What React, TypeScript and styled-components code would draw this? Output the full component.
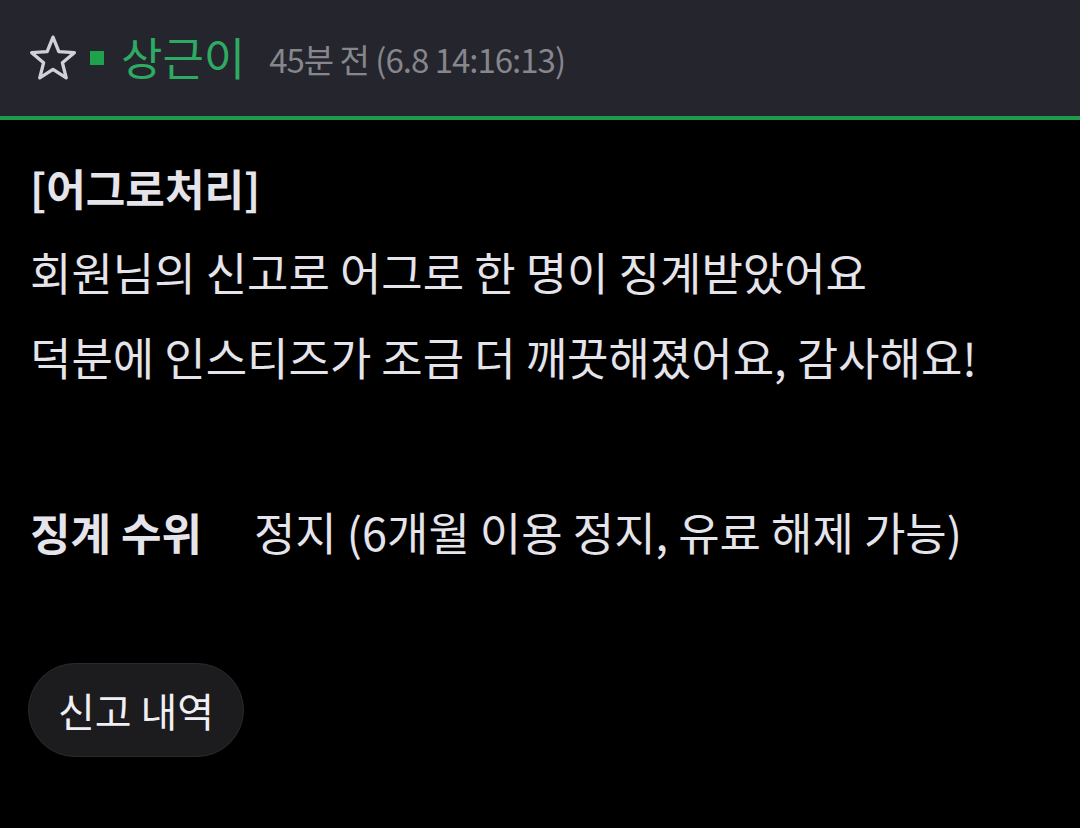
import styled, { createGlobalStyle } from 'styled-components';

const GlobalStyle = createGlobalStyle`
  html, body {
    margin: 0;
    padding: 0;
    background: #000000;
  }
  body {
    font-family: 'Noto Sans CJK KR', 'Noto Sans', sans-serif;
  }
`;

const StarIcon = () => (
  <svg width="50" height="48" viewBox="0 0 48 46" fill="none">
    <path
      d="M24 3 L29.6 16.9 L44.5 17.9 L33 27.5 L36.7 42 L24 34 L11.3 42 L15 27.5 L3.5 17.9 L18.4 16.9 Z"
      stroke="#d2d2d6"
      strokeWidth="3.2"
      strokeLinejoin="round"
    />
  </svg>
);

export default function App() {
  return (
    <Page>
      <GlobalStyle />
      <Header>
        <StarButton>
          <StarIcon />
        </StarButton>
        <Badge />
        <Nick>상근이</Nick>
        <Time>45분 전 (6.8 14:16:13)</Time>
      </Header>

      <Body>
        <Title>[어그로처리]</Title>
        <Line>회원님의 신고로 어그로 한 명이 징계받았어요</Line>
        <Line>덕분에 인스티즈가 조금 더 깨끗해졌어요, 감사해요!</Line>

        <InfoRow>
          <InfoLabel>징계 수위</InfoLabel>
          <InfoValue>정지 (6개월 이용 정지, 유료 해제 가능)</InfoValue>
        </InfoRow>

        <PillButton>신고 내역</PillButton>
      </Body>
    </Page>
  );
}

const Page = styled.div`
  width: 1080px;
  min-height: 828px;
  background: #000000;
  color: #e4e4ea;
`;

const Header = styled.div`
  display: flex;
  align-items: center;
  height: 116px;
  padding: 0 0 0 28px;
  background: #24252d;
  border-bottom: 4px solid #1d9a4a;
  box-sizing: content-box;
`;

const StarButton = styled.div`
  display: flex;
  align-items: center;
  margin-right: 12px;
  margin-top: 0;
`;

const Badge = styled.span`
  width: 14px;
  height: 14px;
  background: #1ea34c;
  margin-right: 17px;
`;

const Nick = styled.span`
  font-size: 45px;
  color: #2eaa62;
  line-height: 1;
  margin-right: 24px;
  margin-top: -4px;
`;

const Time = styled.span`
  font-size: 33px;
  color: #86868c;
  letter-spacing: -1px;
  line-height: 1;
  margin-top: 2px;
`;

const Body = styled.div`
  display: flex;
  flex-direction: column;
  align-items: flex-start;
  padding: 37px 30px 0;
`;

const Title = styled.div`
  font-size: 43px;
  font-weight: 700;
  line-height: 60px;
`;

const Line = styled.div`
  font-size: 45px;
  line-height: 60px;
  margin-top: 25px;
`;

const InfoRow = styled.div`
  display: flex;
  align-items: center;
  gap: 52px;
  margin-top: 115px;
  line-height: 60px;
`;

const InfoLabel = styled.span`
  font-size: 44px;
  font-weight: 700;
`;

const InfoValue = styled.span`
  font-size: 45px;
`;

const PillButton = styled.button`
  margin-top: 101px;
  margin-left: -2px;
  height: 94px;
  padding: 0 29px;
  border-radius: 47px;
  background: #1c1c1f;
  border: 1.5px solid #2a2a2e;
  color: #f0f0f4;
  font-family: 'Noto Sans CJK KR', 'Noto Sans', sans-serif;
  font-size: 40px;
  line-height: 1;
`;
